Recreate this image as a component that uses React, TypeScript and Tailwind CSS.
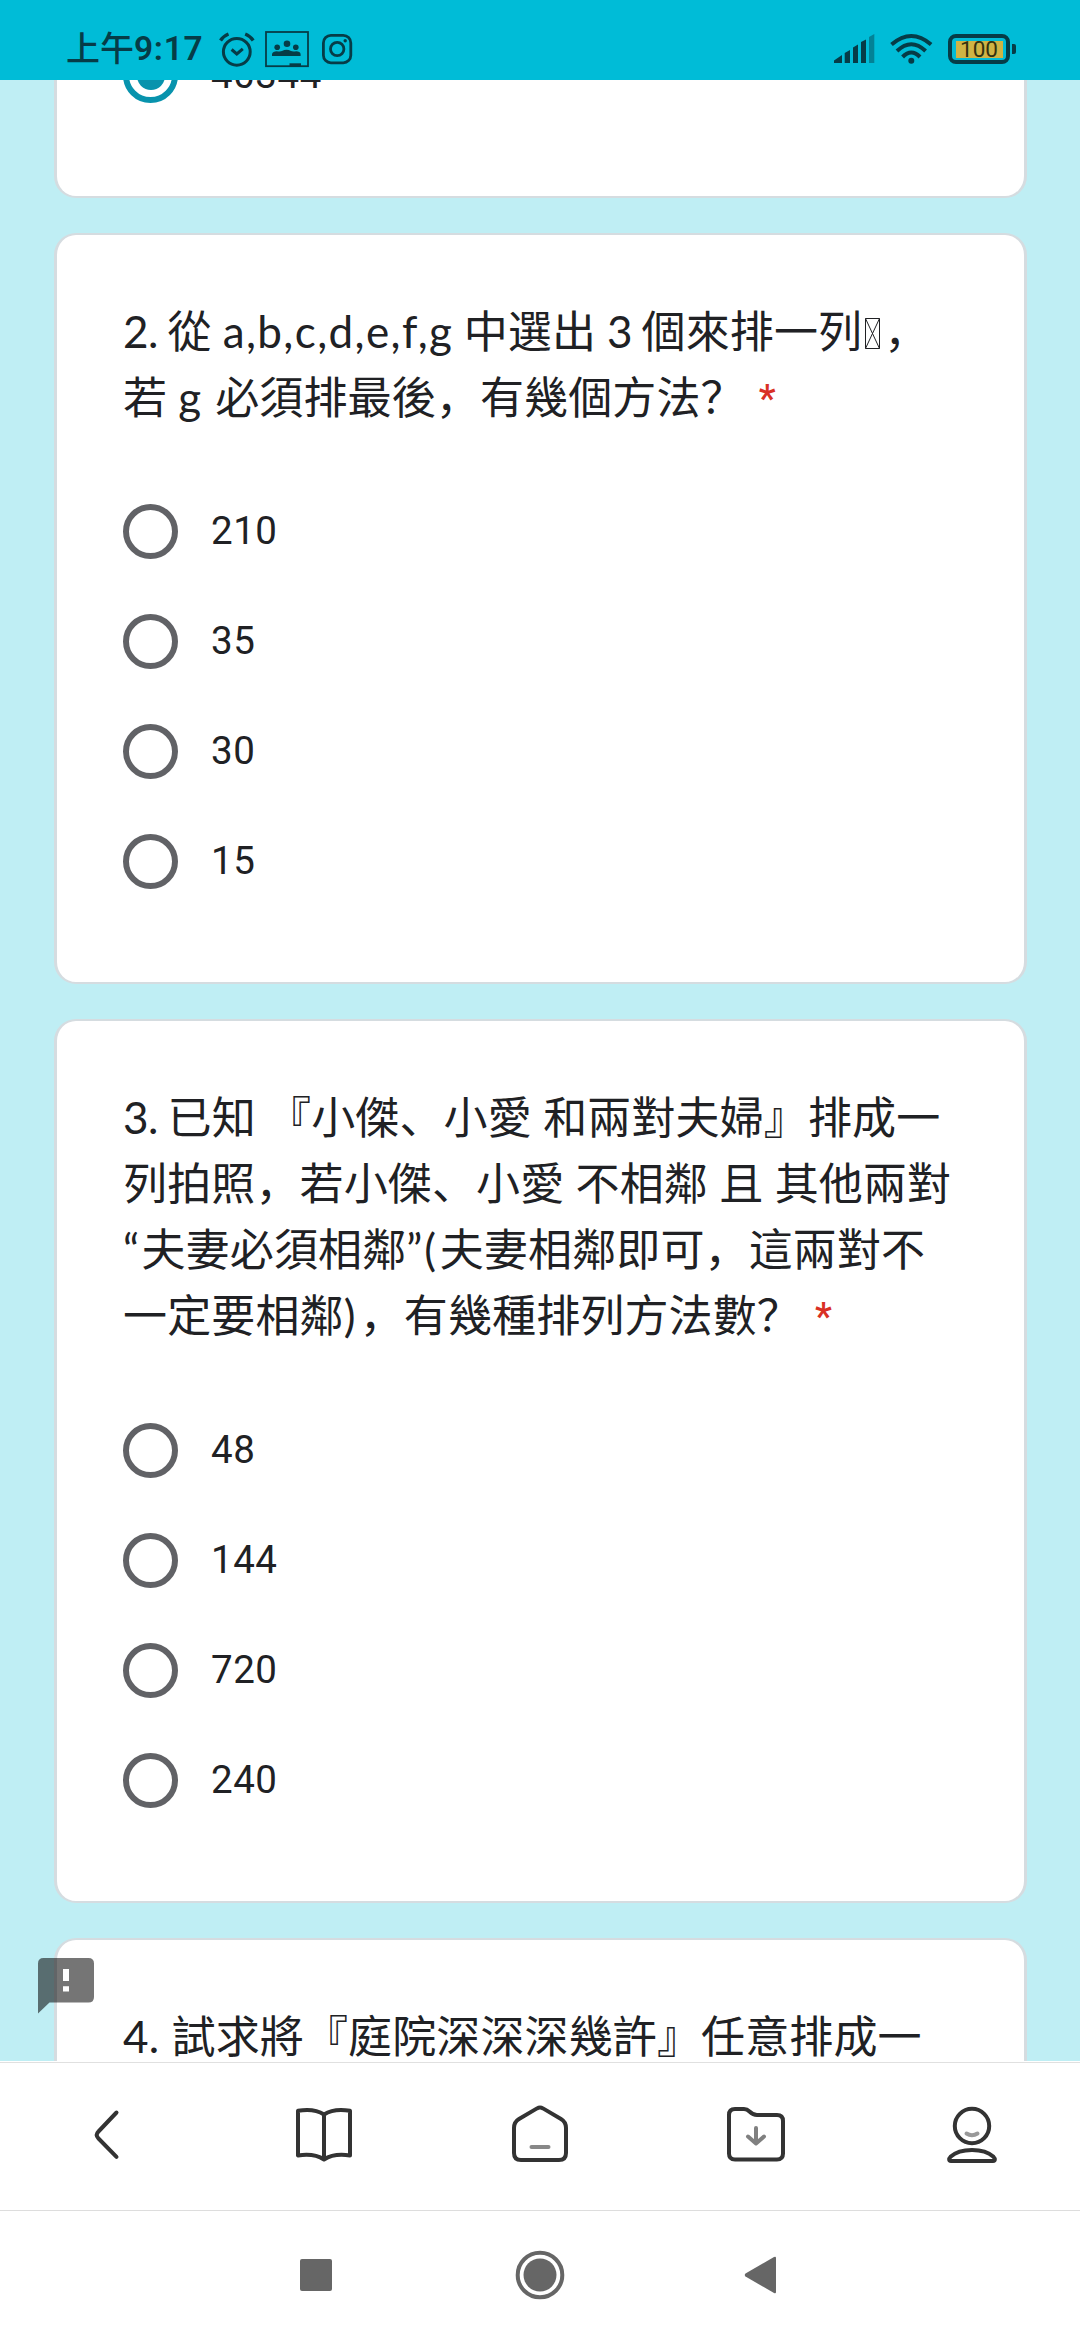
import React from 'react';

interface OptionProps {
  label: string;
  selected?: boolean;
}

interface LatinProps {
  className: string;
  children: React.ReactNode;
}

interface QuestionCardProps {
  className: string;
  title: React.ReactNode[];
  options?: string[];
}

// Latin characters mixed into the Chinese titles
const Latin: React.FC<LatinProps> = ({ className, children }) => (
  <span className={`inline-block whitespace-pre font-['Lato',sans-serif] ${className}`}>{children}</span>
);

const Required: React.FC = () => (
  <span className="relative -top-[2px] ml-[14px] font-['Roboto',sans-serif] text-[38px] leading-none font-medium text-[#d93025]">
    *
  </span>
);

// Box drawn for a character the font does not have
const MissingGlyph: React.FC = () => (
  <svg className="ml-[3px] mr-1 inline-block align-[-1px]" width="15" height="31" viewBox="0 0 15 31" fill="none" stroke="#202124">
    <path d="M.5 .5H14.5V30.5H.5ZM.5 .5L14.5 30.5M14.5 .5L.5 30.5" />
  </svg>
);

const Option: React.FC<OptionProps> = ({ label, selected }) => (
  <div className="flex h-[55px] shrink-0 items-center gap-[33px]">
    <div
      className={`flex h-[55px] w-[55px] items-center justify-center rounded-full border-[6px] ${
        selected ? 'border-[#0893ad]' : 'border-[#616266]'
      }`}
    >
      {selected && <div className="h-[28px] w-[28px] rounded-full bg-[#0893ad]" />}
    </div>
    <span className="-mt-[2px] font-['Roboto',sans-serif] text-[38.5px] leading-[55px] tracking-[0.55px] text-[#202124]">
      {label}
    </span>
  </div>
);

const QuestionCard: React.FC<QuestionCardProps> = ({ className, title, options = [] }) => (
  <section
    className={`flex shrink-0 flex-col rounded-[22px] border-x-[3px] border-y-2 border-[#d5dce0] bg-white pl-[66px] pt-[61px] ${className}`}
  >
    <h2 className="text-[44px] font-normal leading-[66px] tracking-[0.13px] text-[#202124]">
      {title.map((line, i) => (
        <div key={i} className="h-[66px] whitespace-nowrap">
          {line}
        </div>
      ))}
    </h2>
    {options.length > 0 && (
      <div className="mt-auto flex flex-col gap-[55px] pb-[93px]">
        {options.map((o) => (
          <Option key={o} label={o} />
        ))}
      </div>
    )}
  </section>
);

const StatusBar: React.FC = () => (
  <header className="flex h-20 shrink-0 items-start bg-[#00bcd7] pl-[66px] pr-[64px] text-[#063c47]">
    <div className="mt-[30px] flex h-[38px] items-center text-[33.5px] leading-[38px] font-medium">
      <span className="-mt-[5px] font-['Noto_Sans_CJK_SC',sans-serif] text-[34px]">上午</span>
      <span className="font-['Roboto',sans-serif] font-semibold tracking-[0.7px]">9:17</span>
    </div>
    {/* Alarm */}
    <svg className="ml-[15px] mt-[30px]" width="38" height="40" viewBox="218 30 38 40" fill="none" stroke="currentColor" strokeWidth="3">
      <circle cx="236.8" cy="51.8" r="13.4" />
      <path d="M231.6 49.5L236.8 54L242.8 48.8" />
      <path d="M220.5 40.5Q223.5 36 228.5 34M253.2 40.5Q250.2 36 245.2 34" strokeWidth="3.4" />
    </svg>
    {/* Classroom */}
    <svg className="ml-[8px] mt-[30px]" width="46" height="40" viewBox="264 30 46 40" fill="currentColor">
      <rect x="266" y="32" width="42" height="34.2" fill="none" stroke="currentColor" strokeWidth="1.8" />
      <circle cx="287" cy="43.7" r="3.3" />
      <circle cx="277.2" cy="47.2" r="2.8" />
      <circle cx="295.8" cy="47.2" r="2.8" />
      <path d="M272 56V54Q273 51 278 51.4Q281 51.6 282 51Q286.5 48.6 291 51Q292 51.6 295 51.4Q300 51 300.6 54V56Z" />
      <path d="M289.5 63.3H301V66H289.5Z" />
    </svg>
    {/* Instagram */}
    <svg className="ml-[10px] mt-[30px]" width="34" height="40" viewBox="320 30 34 40" fill="none" stroke="currentColor" strokeWidth="2.8">
      <rect x="323.4" y="35.4" width="27.4" height="27.4" rx="7.5" />
      <circle cx="337.2" cy="49" r="6.7" />
      <circle cx="345.2" cy="40.8" r="1.7" fill="currentColor" stroke="none" />
    </svg>

    {/* Signal */}
    <svg className="ml-auto mt-[30px]" width="42" height="36" viewBox="834 30 42 36" fill="currentColor">
      <path d="M834 63V60.5L842 55V63ZM844.7 63V53L850 50V63ZM853 63V47.5L858 44.5V63ZM861 63V42L866 39.5V63Z" />
      <path d="M869 63V37L874.3 34V63Z" opacity=".45" />
    </svg>
    {/* Wifi */}
    <svg className="ml-[13px] mt-[30px]" width="44" height="36" viewBox="889 30 44 36" fill="none" stroke="currentColor" strokeWidth="4">
      <path d="M891.5 44.5Q911.3 27.5 931.1 44.5" />
      <path d="M897 51Q911.3 37.5 925.6 51" />
      <path d="M902.6 57Q911.3 48 920 57" />
      <circle cx="911.3" cy="60.8" r="3" fill="currentColor" stroke="none" />
    </svg>
    {/* Battery */}
    <div className="ml-[15px] mt-[34px] flex items-center">
      <div className="flex h-[30px] w-[62px] items-center justify-center rounded-[8px] border-4 border-current">
        <div className="flex h-[17px] w-[47px] items-center justify-center bg-[#cfb445] font-['Roboto',sans-serif] text-[22.5px] leading-[17px] text-[#33320f]">
          100
        </div>
      </div>
      <div className="ml-[2px] h-[10px] w-1 rounded-r-[2px] bg-current" />
    </div>
  </header>
);

const BrowserBar: React.FC = () => (
  <nav className="h-[149px] shrink-0 bg-white pt-px">
    <div className="grid h-[148px] grid-cols-5 items-center justify-items-center border-t border-[#e0e0e0] pb-[3px] text-[#333333]">
      <svg width="60" height="60" viewBox="0 0 60 60" fill="none" stroke="currentColor" strokeWidth="4" strokeLinecap="round">
        <path d="M38.5 7.5L20.5 26.5Q17 30 20.5 33.5L38.5 51.8" />
      </svg>
      <svg width="60" height="60" viewBox="0 0 60 60" fill="none" stroke="currentColor" strokeWidth="4" strokeLinejoin="round">
        <path d="M4 5.8Q20 3 30 9.5Q40 3 56 5.8V50.5Q40 48 30 54.5Q20 48 4 50.5ZM30 9.5V54.5" />
      </svg>
      <svg width="60" height="60" viewBox="0 0 60 60" fill="none" stroke="currentColor" strokeWidth="4" strokeLinecap="round">
        <path d="M11 55Q4 55 4 48V23Q4 17 9 14L27 3.4Q30 1.8 33 3.4L51 14Q56 17 56 23V48Q56 55 49 55Z" />
        <path d="M21.5 42H38.5" stroke="#888888" />
      </svg>
      <svg width="60" height="60" viewBox="0 0 60 60" fill="none" stroke="currentColor" strokeWidth="4" strokeLinecap="round" strokeLinejoin="round">
        <path d="M9 4H18Q21 4 23.5 6.5Q27 10 31 10H51Q57 10 57 16V48.5Q57 54.4 51 54.4H9Q3 54.4 3 48.5V10Q3 4 9 4Z" />
        <path d="M30 23V38M22 31.5L30 38.5L38 31.5" stroke="#808080" />
      </svg>
      <svg width="60" height="60" viewBox="0 0 60 60" fill="none" stroke="currentColor" strokeWidth="4" strokeLinecap="round">
        <circle cx="30" cy="21" r="17.2" />
        <path d="M24.5 28.5Q30 32 35.5 28.5" stroke="#999999" />
        <path d="M9 56C6.5 56 6.8 53.5 8.5 51.8Q16 45 30 45Q44 45 51.5 51.8C53.2 53.5 53.5 56 51 56Z" />
      </svg>
    </div>
  </nav>
);

const SystemBar: React.FC = () => (
  <nav className="flex h-[130px] shrink-0 items-center border-t border-[#dddddd] bg-white pb-px pl-[300px] text-[#666666]">
    <div className="h-8 w-8 rounded-[2px] bg-current" />
    <svg className="ml-[183px]" width="50" height="50" viewBox="0 0 50 50">
      <circle cx="25" cy="25" r="22.3" fill="none" stroke="currentColor" strokeWidth="4" />
      <circle cx="25" cy="25" r="16.5" fill="currentColor" />
    </svg>
    <svg className="ml-[179px]" width="32" height="38" viewBox="0 0 32 38" fill="currentColor">
      <path d="M1.5 17.5Q0 19 1.5 20.5L30 37Q32 38 32 36V2Q32 0 30 1Z" />
    </svg>
  </nav>
);

export default function App() {
  return (
    <div className="flex h-[2340px] w-[1080px] flex-col overflow-hidden bg-[#bfeef4] font-['Noto_Sans_CJK_SC',sans-serif]">
      <StatusBar />

      <main className="relative flex h-[1981px] shrink-0 flex-col overflow-hidden pl-[54px] pr-[53px]">
        {/* Question 1, scrolled under the status bar */}
        <section className="flex h-[118px] shrink-0 flex-col justify-end rounded-b-[22px] border-x-[3px] border-b-2 border-[#d5dce0] bg-white pb-[93px] pl-[66px]">
          <Option label="40344" selected />
        </section>

        <QuestionCard
          className="mt-[35px] h-[751px]"
          title={[
            <>
              <Latin className="w-[44.5px] tracking-[-0.5px]">2.</Latin>從
              <Latin className="w-[252px] pl-[11px] tracking-[1.4px]">a,b,c,d,e,f,g</Latin>中選出
              <Latin className="w-[45.5px] pl-[11px]">3</Latin>個來排一列
              <MissingGlyph />，
            </>,
            <>
              若<Latin className="w-[48px] pl-[11px]">g</Latin>必須排最後，有幾個方法？
              <Required />
            </>,
          ]}
          options={['210', '35', '30', '15']}
        />

        <QuestionCard
          className="mt-[35px] h-[884px]"
          title={[
            <>
              <Latin className="w-[44.5px] tracking-[-0.5px]">3.</Latin>已知
              <Latin className="w-[11.3px]"> </Latin>『小傑、小愛<Latin className="w-[11.3px]"> </Latin>和兩對夫婦』排成一
            </>,
            <>
              列拍照，若小傑、小愛<Latin className="w-[11.3px]"> </Latin>不相鄰
              <Latin className="w-[11.3px]"> </Latin>且<Latin className="w-[11.3px]"> </Latin>其他兩對
            </>,
            <>
              <Latin className="w-[18.5px]">“</Latin>夫妻必須相鄰
              <Latin className="w-[33.5px] tracking-[2px]">”(</Latin>夫妻相鄰即可，這兩對不
            </>,
            <>
              一定要相鄰<Latin className="w-[16px]">)</Latin>，有幾種排列方法數？
              <Required />
            </>,
          ]}
          options={['48', '144', '720', '240']}
        />

        <QuestionCard
          className="mt-[35px] h-[500px]"
          title={[
            <>
              <Latin className="w-[48.5px]">4.</Latin>試求將『庭院深深深幾許』任意排成一
            </>,
          ]}
        />

        {/* Report problem button */}
        <svg className="absolute left-[38px] top-[1878px]" width="56" height="56" viewBox="0 0 56 56">
          <path d="M5.5 0H50.5Q56 0 56 5.5V39Q56 44.5 50.5 44.5H11.5L0 55.5V5.5Q0 0 5.5 0Z" fill="#000000" fillOpacity=".54" />
          <path d="M25 11H31V23H25ZM25 28.3H31V33.5H25Z" fill="#ffffff" />
        </svg>
      </main>

      <BrowserBar />
      <SystemBar />
    </div>
  );
}
